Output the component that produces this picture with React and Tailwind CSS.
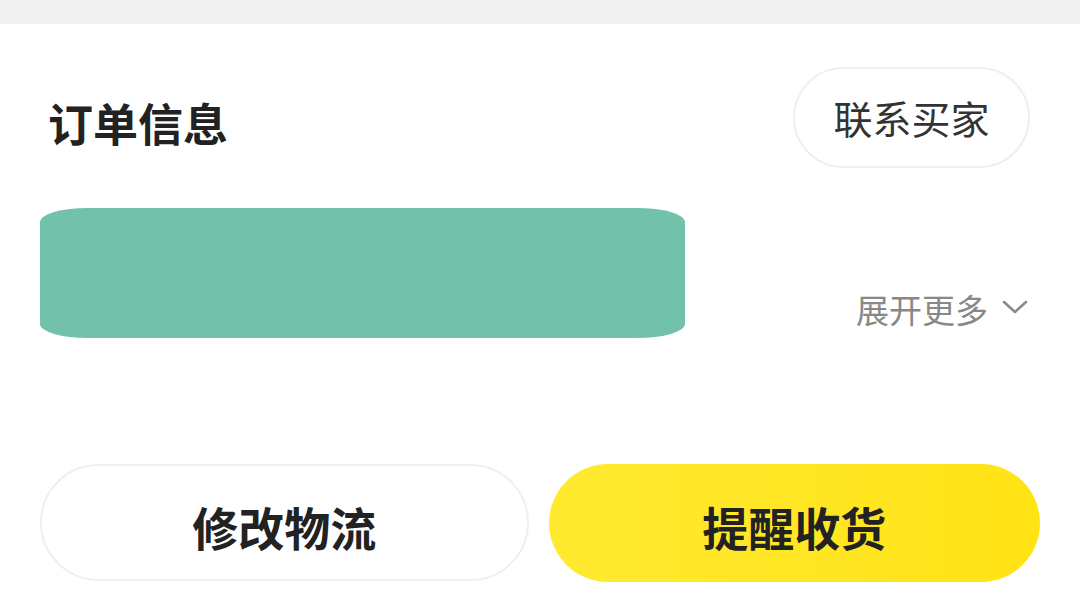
export default function App() {
  return (
    <div
      className="w-[1080px] h-[607px] bg-white overflow-hidden flex flex-col"
      style={{ fontFamily: '"Noto Sans CJK SC", "Noto Sans", sans-serif' }}
    >
      <div className="h-[24px] bg-[#f1f1f1] shrink-0" />
      <div className="px-[40px] flex flex-col">
        <div className="mt-[43px] flex items-center justify-between">
          <div className="ml-[8px] mt-[10px] text-[45px] leading-none font-bold text-[#222]">订单信息</div>
          <button className="mr-[10px] w-[237px] h-[101px] rounded-full border-2 border-[#efefef] bg-white flex items-center justify-center text-[39px] leading-none text-[#333]">
            联系买家
          </button>
        </div>
        <div className="mt-[40px] flex items-end justify-between">
          <div className="w-[645px] h-[130px] bg-[#72c1aa] rounded-[48px/14px]" />
          <div className="mb-[12px] mr-[12px] flex items-center gap-[14px] text-[#888]">
            <span className="text-[33px] leading-none">展开更多</span>
            <svg width="26" height="14" viewBox="0 0 26 14" fill="none" className="-mt-[6px]">
              <path d="M2 2 L13 12 L24 2" stroke="#8a8a8a" strokeWidth="2.6" strokeLinecap="round" strokeLinejoin="round" />
            </svg>
          </div>
        </div>
        <div className="mt-[126px] flex gap-[20px]">
          <button className="w-[489px] h-[117px] pt-[6px] rounded-full border-2 border-[#efefef] bg-white flex items-center justify-center text-[46px] leading-none font-bold text-[#222]">
            修改物流
          </button>
          <button className="w-[492px] h-[118px] pt-[6px] rounded-full bg-linear-to-r from-[#ffea30] to-[#ffe313] flex items-center justify-center text-[46px] leading-none font-bold text-[#222]">
            提醒收货
          </button>
        </div>
      </div>
    </div>
  );
}
